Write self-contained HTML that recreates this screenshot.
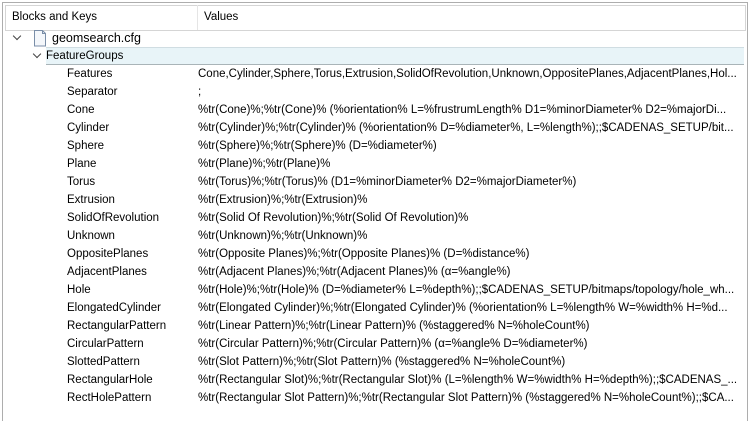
<!DOCTYPE html><html><head><style>
body{margin:0;width:750px;height:419px;background:#fff;font-family:"Liberation Sans",sans-serif;font-size:11.5px;color:#000;overflow:hidden;position:relative}
.outer{position:absolute;left:2px;top:2px;width:744px;height:418px;border:1px solid #adadad;border-bottom:none}
.hdr{position:absolute;left:5px;top:5px;width:739px;height:24px;border:1px solid #d5d5d5;background:#fff}
.hdr div{position:absolute;top:5px}
.sep{position:absolute;left:197px;top:5px;width:1px;height:25px;background:#e5e5e5}
.r{position:absolute;white-space:nowrap;height:18px;line-height:18px}
.k{left:67px}.v{left:198px}
.hl{position:absolute;left:46px;top:47px;width:698px;height:16px;background:#e8f4f8;border-top:1px solid #d0dde2;border-bottom:1px solid #a9b4b8}
.chev{position:absolute;width:5px;height:5px;border-right:1.3px solid #444;border-bottom:1.3px solid #444;transform:rotate(45deg)}
</style></head><body>
<div class="outer"></div>
<div class="hdr"><div style="left:6px">Blocks and Keys</div><div style="left:198px">Values</div></div>
<div class="sep"></div>
<div class="chev" style="left:14px;top:33px"></div>
<svg style="position:absolute;left:33px;top:30px" width="14" height="17"><path d="M1.5 0.5h8l3 3v12.5h-11z" fill="#f4f7fb" stroke="#7a8ea8"/><path d="M9.5 0.5v3h3" fill="none" stroke="#7a8ea8"/></svg>
<div class="r" style="left:52px;top:29px;font-size:12.5px">geomsearch.cfg</div>
<div class="hl"></div>
<div class="chev" style="left:34px;top:51px"></div>
<div class="r" style="left:46px;top:47px">FeatureGroups</div>
<div class="r k" style="top:65px">Features</div><div class="r v" style="top:65px">Cone,Cylinder,Sphere,Torus,Extrusion,SolidOfRevolution,Unknown,OppositePlanes,AdjacentPlanes,Hol...</div>
<div class="r k" style="top:83px">Separator</div><div class="r v" style="top:83px">;</div>
<div class="r k" style="top:101px">Cone</div><div class="r v" style="top:101px">%tr(Cone)%;%tr(Cone)% (%orientation% L=%frustrumLength% D1=%minorDiameter% D2=%majorDi...</div>
<div class="r k" style="top:119px">Cylinder</div><div class="r v" style="top:119px">%tr(Cylinder)%;%tr(Cylinder)% (%orientation% D=%diameter%, L=%length%);;$CADENAS_SETUP/bit...</div>
<div class="r k" style="top:137px">Sphere</div><div class="r v" style="top:137px">%tr(Sphere)%;%tr(Sphere)% (D=%diameter%)</div>
<div class="r k" style="top:155px">Plane</div><div class="r v" style="top:155px">%tr(Plane)%;%tr(Plane)%</div>
<div class="r k" style="top:173px">Torus</div><div class="r v" style="top:173px">%tr(Torus)%;%tr(Torus)% (D1=%minorDiameter% D2=%majorDiameter%)</div>
<div class="r k" style="top:191px">Extrusion</div><div class="r v" style="top:191px">%tr(Extrusion)%;%tr(Extrusion)%</div>
<div class="r k" style="top:209px">SolidOfRevolution</div><div class="r v" style="top:209px">%tr(Solid Of Revolution)%;%tr(Solid Of Revolution)%</div>
<div class="r k" style="top:227px">Unknown</div><div class="r v" style="top:227px">%tr(Unknown)%;%tr(Unknown)%</div>
<div class="r k" style="top:245px">OppositePlanes</div><div class="r v" style="top:245px">%tr(Opposite Planes)%;%tr(Opposite Planes)% (D=%distance%)</div>
<div class="r k" style="top:263px">AdjacentPlanes</div><div class="r v" style="top:263px">%tr(Adjacent Planes)%;%tr(Adjacent Planes)% (α=%angle%)</div>
<div class="r k" style="top:281px">Hole</div><div class="r v" style="top:281px">%tr(Hole)%;%tr(Hole)% (D=%diameter% L=%depth%);;$CADENAS_SETUP/bitmaps/topology/hole_wh...</div>
<div class="r k" style="top:299px">ElongatedCylinder</div><div class="r v" style="top:299px">%tr(Elongated Cylinder)%;%tr(Elongated Cylinder)% (%orientation% L=%length% W=%width% H=%d...</div>
<div class="r k" style="top:317px">RectangularPattern</div><div class="r v" style="top:317px">%tr(Linear Pattern)%;%tr(Linear Pattern)% (%staggered% N=%holeCount%)</div>
<div class="r k" style="top:335px">CircularPattern</div><div class="r v" style="top:335px">%tr(Circular Pattern)%;%tr(Circular Pattern)% (α=%angle% D=%diameter%)</div>
<div class="r k" style="top:353px">SlottedPattern</div><div class="r v" style="top:353px">%tr(Slot Pattern)%;%tr(Slot Pattern)% (%staggered% N=%holeCount%)</div>
<div class="r k" style="top:371px">RectangularHole</div><div class="r v" style="top:371px">%tr(Rectangular Slot)%;%tr(Rectangular Slot)% (L=%length% W=%width% H=%depth%);;$CADENAS_...</div>
<div class="r k" style="top:389px">RectHolePattern</div><div class="r v" style="top:389px">%tr(Rectangular Slot Pattern)%;%tr(Rectangular Slot Pattern)% (%staggered% N=%holeCount%);;$CA...</div>
</body></html>
